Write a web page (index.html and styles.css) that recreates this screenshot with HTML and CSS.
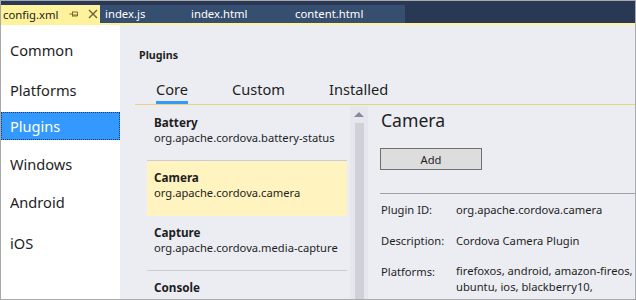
FILE: index.html
```html
<!DOCTYPE html>
<html lang="en">
<head>
    <meta charset="UTF-8">
    <title>config.xml</title>
    <link rel="stylesheet" href="styles.css">
</head>
<body>
<div class="window">

    <!-- Document tabs -->
    <div class="doc-tabs">
        <div class="doc-tab active">
            <span class="doc-name">config.xml</span>
            <svg class="pin" width="10" height="10" viewBox="0 0 10 10"><path d="M0.5 5h3M3.5 2.5v5M3.5 3h5v4h-5M3.5 6h5" fill="none" stroke="#7a6a2a" stroke-width="1"/></svg>
            <svg class="close" width="10" height="10" viewBox="0 0 10 10"><path d="M1 1l8 8M9 1l-8 8" stroke="#6d6338" stroke-width="1.4"/></svg>
        </div>
        <div class="doc-tabs-rest">
            <span class="doc-tab tab-js">index.js</span>
            <span class="doc-tab tab-html">index.html</span>
            <span class="doc-tab tab-content">content.html</span>
        </div>
    </div>
    <div class="doc-strip"></div>

    <div class="main">
        <!-- Left category list -->
        <ul class="categories">
            <li>Common</li>
            <li>Platforms</li>
            <li class="selected">Plugins</li>
            <li>Windows</li>
            <li>Android</li>
            <li>iOS</li>
        </ul>

        <!-- Plugins page -->
        <div class="page">
            <h3 class="page-title">Plugins</h3>
            <div class="pivot">
                <span class="pivot-item current">Core</span>
                <span class="pivot-item">Custom</span>
                <span class="pivot-item">Installed</span>
            </div>

            <div class="panes">
                <div class="plugin-list">
                    <div class="plugins">
                        <div class="plugin">
                            <b>Battery</b>
                            <span>org.apache.cordova.battery-status</span>
                        </div>
                        <div class="plugin picked">
                            <b>Camera</b>
                            <span>org.apache.cordova.camera</span>
                        </div>
                        <div class="plugin">
                            <b>Capture</b>
                            <span>org.apache.cordova.media-capture</span>
                        </div>
                        <div class="plugin">
                            <b>Console</b>
                        </div>
                    </div>
                    <div class="scrollbar">
                        <div class="scroll-up"></div>
                        <div class="scroll-thumb"></div>
                    </div>
                </div>

                <div class="details">
                    <h2 class="details-title">Camera</h2>
                    <button class="add-btn">Add</button>
                    <div class="props">
                        <span class="prop-name">Plugin ID:</span>
                        <span>org.apache.cordova.camera</span>
                        <span class="prop-name">Description:</span>
                        <span>Cordova Camera Plugin</span>
                        <span class="prop-name">Platforms:</span>
                        <span class="prop-wrap">firefoxos, android, amazon-fireos,<br>ubuntu, ios, blackberry10,</span>
                    </div>
                </div>
            </div>
        </div>
    </div>
</div>
</body>
</html>
```

FILE: styles.css
```css
/* Reset */
* {
    margin: 0;
    padding: 0;
    box-sizing: border-box;
}

body {
    width: 636px;
    height: 300px;
    overflow: hidden;
    font-family: 'Noto Sans', 'Open Sans', sans-serif;
    color: #1e1e1e;
}

.window {
    width: 636px;
    height: 300px;
    border: 1px solid #a9a9a9;
    display: flex;
    flex-direction: column;
    background-color: #ecedf3;
    overflow: hidden;
}

/* Document tabs */
.doc-tabs {
    height: 22px;
    flex-shrink: 0;
    background-color: #293955;
    display: flex;
    align-items: flex-end;
}

.doc-tab {
    font-size: 11.3px;
    color: #fff;
    height: 18px;
    line-height: 17px;
}

.doc-tab.active {
    width: 99px;
    background-color: #fff29d;
    color: #1e1e1e;
    display: flex;
    align-items: center;
    padding-left: 2px;
}

.doc-name {
    width: 66px;
}

.pin {
    margin-right: 9px;
}

.doc-tabs-rest {
    width: 305px;
    height: 18px;
    background-color: #364e6f;
    display: flex;
}

.tab-js { width: 91px; padding-left: 5px; }
.tab-html { width: 104px; }
.tab-content { width: 100px; }

.doc-strip {
    height: 2px;
    flex-shrink: 0;
    background-color: #fff29d;
}

/* Main area */
.main {
    flex: 1;
    display: flex;
    min-height: 0;
}

.categories {
    width: 119px;
    background-color: #fff;
    list-style: none;
    padding-top: 11px;
    display: flex;
    flex-direction: column;
    gap: 10px;
}

.categories li {
    height: 28px;
    line-height: 27px;
    font-size: 14.6px;
    padding-left: 8px;
    border: 1px dotted transparent;
}

.categories li:nth-child(2) {
    margin-top: 2px;
    margin-bottom: -2px;
}

.categories li:last-child {
    margin-top: 3px;
}

.categories li.selected {
    background-color: #3399ff;
    color: #fff;
    border-color: #1b3a66;
}

/* Page */
.page {
    flex: 1;
    padding-left: 15px;
    min-width: 0;
    display: flex;
    flex-direction: column;
}

.page-title {
    font-size: 10.7px;
    font-weight: bold;
    margin-top: 21px;
    margin-left: 4px;
    height: 18px;
    line-height: 18px;
}

.pivot {
    margin-top: 6px;
    display: flex;
    border-bottom: 1px solid #e8d27a;
    height: 35px;
    padding-left: 21px;
}

.pivot-item {
    font-size: 14.6px;
    height: 34px;
    line-height: 20px;
    padding-top: 9px;
    margin-right: 44px;
}

.pivot-item.current {
    border-bottom: 3px solid #3399ff;
}

.panes {
    flex: 1;
    display: flex;
    min-height: 0;
}

/* Plugin list */
.plugin-list {
    width: 233px;
    display: flex;
    padding-top: 1px;
}

.plugins {
    width: 212px;
    padding-left: 12px;
}

.plugin {
    height: 55px;
    padding: 8px 0 0 7px;
    font-size: 11.2px;
    line-height: 16px;
    display: flex;
    flex-direction: column;
    border-bottom: 1px solid #c9cbd8;
    white-space: nowrap;
}

.plugin:nth-child(2) { border-bottom: none; }

.plugin.picked {
    background-color: #fff3c0;
}

.plugin b {
    font-size: 11.7px;
}

.scrollbar {
    width: 18px;
    margin-left: 3px;
    background-color: #e6e7ee;
    display: flex;
    flex-direction: column;
    align-items: center;
}

.scroll-up {
    margin-top: 6px;
    width: 0;
    height: 0;
    border-left: 5px solid transparent;
    border-right: 5px solid transparent;
    border-bottom: 5px solid #868999;
}

.scroll-thumb {
    margin-top: 6px;
    width: 9px;
    flex: 1;
    background-color: #d0d1d7;
}

/* Details */
.details {
    flex: 1;
    padding-left: 12px;
    padding-top: 2px;
}

.details-title {
    font-size: 17.6px;
    font-weight: normal;
    height: 29px;
    line-height: 26px;
    margin-left: 1px;
}

.add-btn {
    display: block;
    margin-top: 12px;
    width: 102px;
    height: 22px;
    background-color: #dddddd;
    border: 1px solid #707070;
    font-family: inherit;
    font-size: 11.2px;
    color: #1e1e1e;
}

.props {
    margin-top: 23px;
    border-top: 1px solid #a0a2ab;
    display: grid;
    grid-template-columns: 76px 1fr;
    row-gap: 14px;
    padding-top: 7px;
    font-size: 11.2px;
    line-height: 17px;
    white-space: nowrap;
}

.prop-name {
    padding-left: 1px;
}

.prop-wrap {
    line-height: 16px;
}
```
